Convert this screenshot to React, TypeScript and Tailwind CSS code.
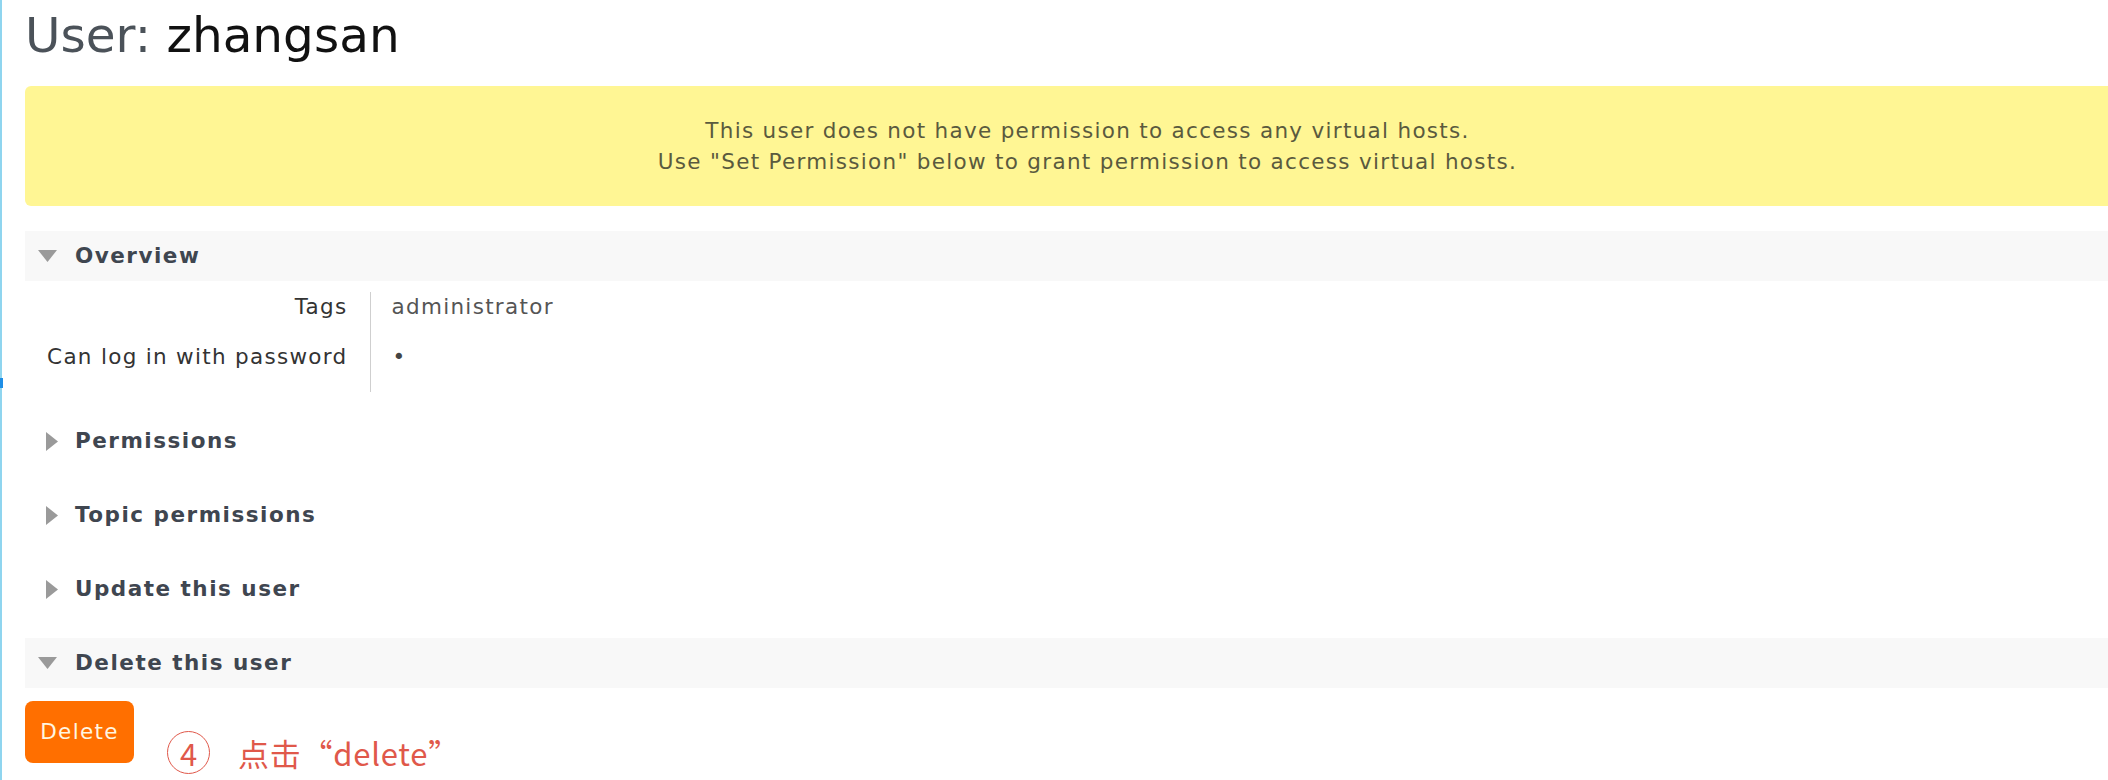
export default function App() {
  const collapsed = ["Permissions", "Topic permissions", "Update this user"]

  return (
    <div className="relative w-[2108px] h-[780px] overflow-hidden bg-white font-['DejaVu_Sans',sans-serif]">
      {/* left frame line */}
      <div className="absolute left-0 top-0 h-full w-[2px] bg-[#8fd5ef]" />
      <div className="absolute left-0 top-[378px] h-[10px] w-[3px] bg-[#1e8ee6]" />

      <div className="w-[2150px] pl-[25px]">
        <h1 className="pt-[7px] h-[63px] leading-[56px] text-[48.5px] text-[#4b5259]">
          User: <span className="text-[#111]">zhangsan</span>
        </h1>

        {/* warning */}
        <div className="mt-[23px] rounded-[6px] bg-[#fff694] pt-[29px] pb-[29px] text-center text-[21.5px] tracking-[1.3px] leading-[31px] text-[#5a5a3e]">
          <p>This user does not have permission to access any virtual hosts.</p>
          <p>Use "Set Permission" below to grant permission to access virtual hosts.</p>
        </div>

        {/* Overview */}
        <div className="mt-[25px] flex h-[50px] items-center bg-[#f8f8f8]">
          <DownTri />
          <span className="ml-[18px] text-[21.5px] tracking-[1.5px] font-bold text-[#3f4650]">Overview</span>
        </div>
        <table className="mt-[11px] text-[21.5px] tracking-[1.3px] leading-[28px]">
          <tbody>
            <tr>
              <th className="w-[345px] pr-[22px] pt-[1px] pb-[21px] text-right font-normal text-[#333] border-r border-[#cfcfcf]">Tags</th>
              <td className="pl-[21px] pt-[1px] pb-[21px] text-[#555]">administrator</td>
            </tr>
            <tr>
              <th className="w-[345px] pr-[22px] pt-[1px] pb-[21px] text-right font-normal text-[#333] border-r border-[#cfcfcf]">Can log in with password</th>
              <td className="pl-[22px] pt-[1px] pb-[21px] text-[#444]">•</td>
            </tr>
          </tbody>
        </table>

        {collapsed.map((t) => (
          <div key={t} className="mt-[24px] flex h-[50px] items-center">
            <RightTri />
            <span className="ml-[17px] text-[21.5px] tracking-[1.5px] font-bold text-[#3f4650]">{t}</span>
          </div>
        ))}

        {/* Delete this user */}
        <div className="mt-[24px] flex h-[50px] items-center bg-[#f8f8f8]">
          <DownTri />
          <span className="ml-[18px] text-[21.5px] tracking-[1.5px] font-bold text-[#3f4650]">Delete this user</span>
        </div>

        <div className="mt-[13px] flex items-start">
          <button className="h-[62px] w-[109px] rounded-[8px] bg-[#ff6f00] text-[21.5px] tracking-[1.3px] text-[#fff6e2]">
            Delete
          </button>
          <div className="ml-[33px] mt-[30px] flex items-center text-[#e0584a] font-['Noto_Sans_CJK_SC',sans-serif]">
            <span className="flex h-[43px] w-[43px] items-center justify-center rounded-full border-[1.5px] border-[#e0584a] text-[31px] leading-none">
              4
            </span>
            <span className="ml-[28px] text-[31px] tracking-[0.75px] leading-[43px]">点击“delete”</span>
          </div>
        </div>
      </div>
    </div>
  )
}

function DownTri() {
  return (
    <svg width="19" height="12" viewBox="0 0 19 12" className="ml-[13px]">
      <polygon points="0,0 19,0 9.5,12" fill="#9a9a9a" />
    </svg>
  )
}

function RightTri() {
  return (
    <svg width="12" height="19" viewBox="0 0 12 19" className="ml-[21px]">
      <polygon points="0,0 12,9.5 0,19" fill="#9a9a9a" />
    </svg>
  )
}
